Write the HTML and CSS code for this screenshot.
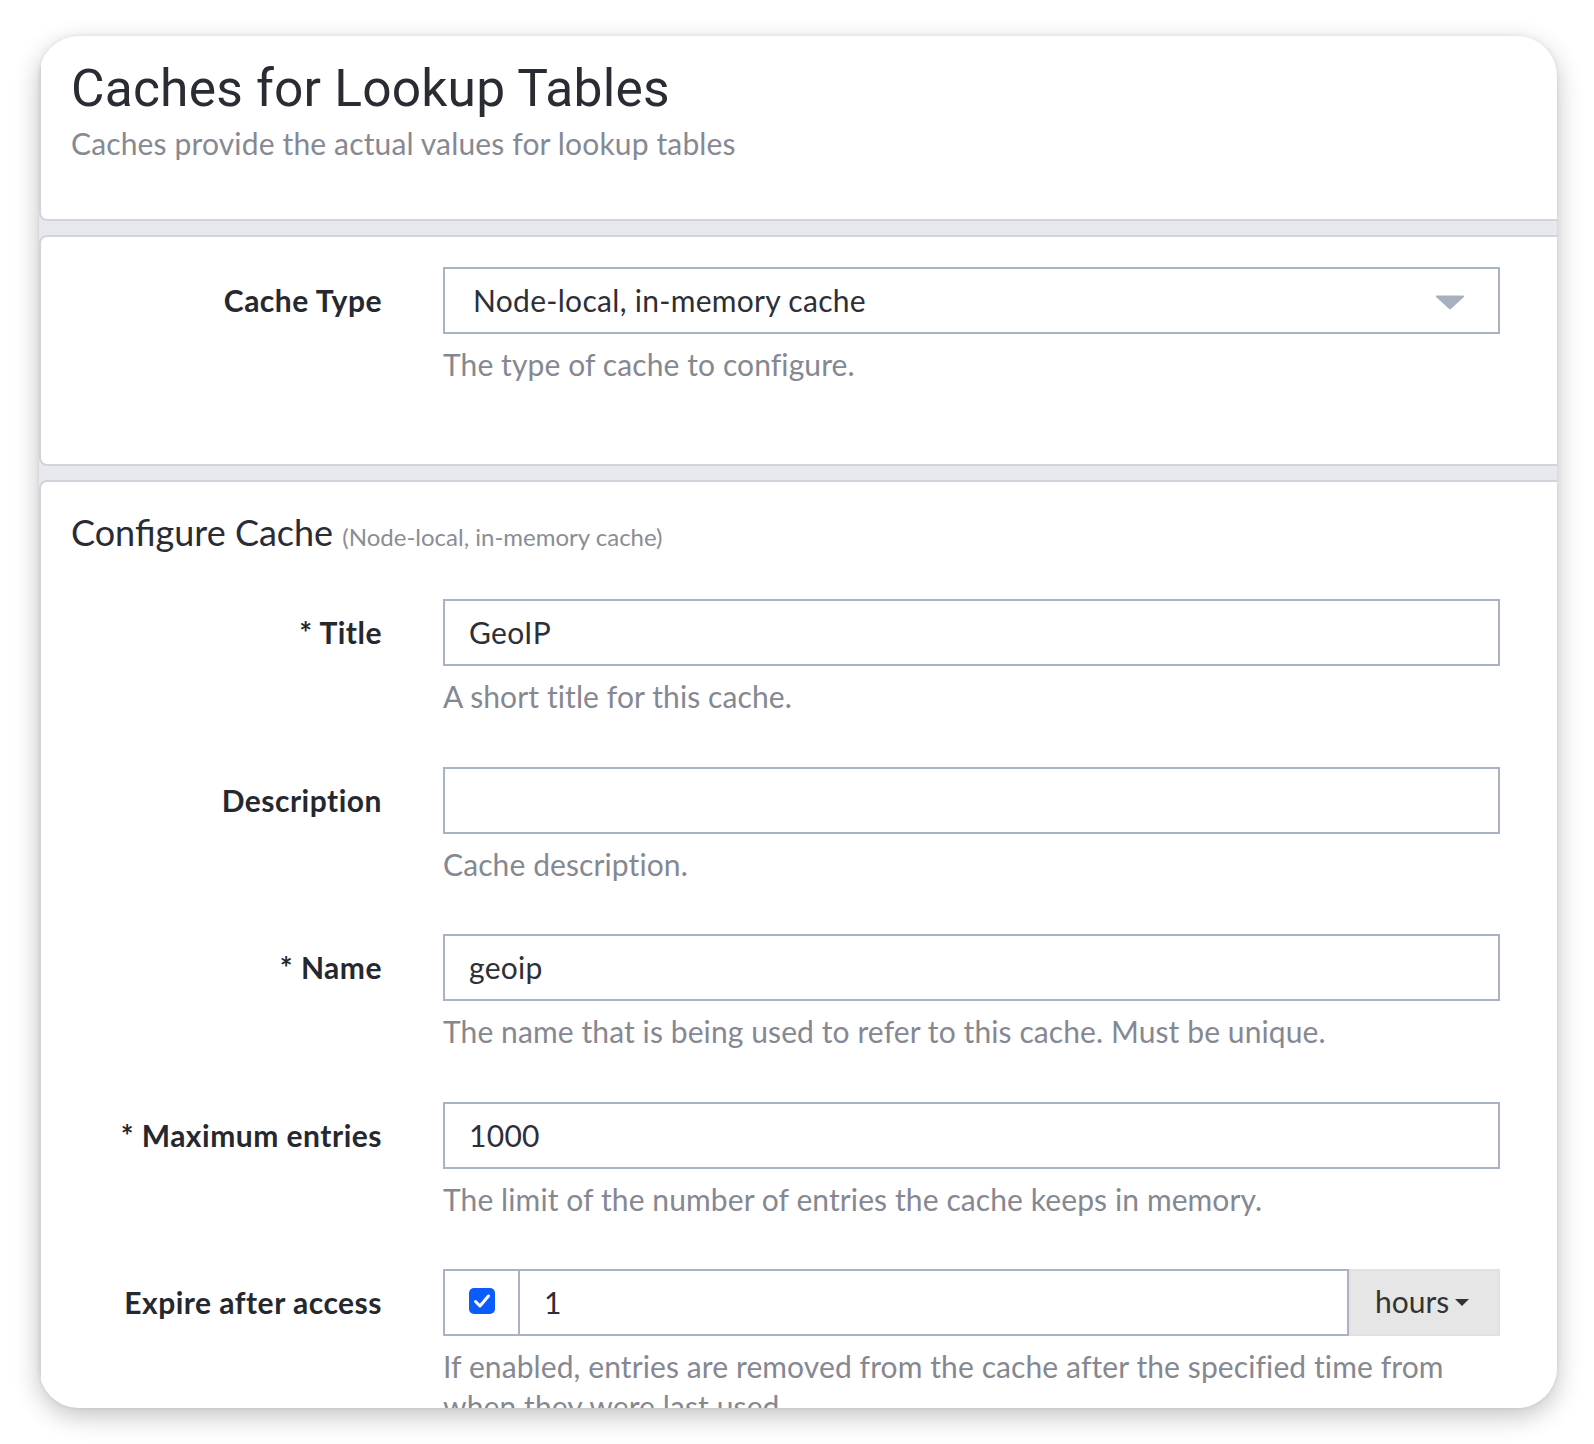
FILE: index.html
```html
<!DOCTYPE html>
<html lang="en">
<head>
<meta charset="utf-8">
<title>Caches for Lookup Tables</title>
<link rel="stylesheet" href="styles.css">
</head>
<body>
<div class="window">
  <section class="panel panel-header">
    <h1 class="page-title">Caches for Lookup Tables</h1>
    <p class="page-sub">Caches provide the actual values for lookup tables</p>
  </section>

  <section class="panel panel-type">
    <div class="form-row">
      <label class="label">Cache Type</label>
      <div class="field">
        <div class="select">
          <span class="select-value">Node-local, in-memory cache</span>
          <svg class="select-caret" width="32" height="16" viewBox="0 0 32 16"><path d="M3 1.5 H29 Q31 1.5 29.6 3.2 L17.4 14.6 Q16 15.8 14.6 14.6 L2.4 3.2 Q1 1.5 3 1.5 Z" fill="#a8b0bf"/></svg>
        </div>
        <p class="help">The type of cache to configure.</p>
      </div>
    </div>
  </section>

  <section class="panel panel-config">
    <h2 class="config-title">Configure Cache <small class="config-sub">(Node-local, in-memory cache)</small></h2>

    <div class="form-row">
      <label class="label">* Title</label>
      <div class="field">
        <div class="input">GeoIP</div>
        <p class="help">A short title for this cache.</p>
      </div>
    </div>

    <div class="form-row">
      <label class="label">Description</label>
      <div class="field">
        <div class="input"></div>
        <p class="help">Cache description.</p>
      </div>
    </div>

    <div class="form-row">
      <label class="label">* Name</label>
      <div class="field">
        <div class="input">geoip</div>
        <p class="help">The name that is being used to refer to this cache. Must be unique.</p>
      </div>
    </div>

    <div class="form-row">
      <label class="label">* Maximum entries</label>
      <div class="field">
        <div class="input">1000</div>
        <p class="help">The limit of the number of entries the cache keeps in memory.</p>
      </div>
    </div>

    <div class="form-row">
      <label class="label">Expire after access</label>
      <div class="field">
        <div class="input-group">
          <div class="addon">
            <span class="checkbox">
              <svg width="18" height="16" viewBox="0 0 18 16"><path d="M2.5 8.5 L7 13 L15.5 3" fill="none" stroke="#fff" stroke-width="3" stroke-linecap="round" stroke-linejoin="round"/></svg>
            </span>
          </div>
          <div class="input group-input">1</div>
          <div class="unit-btn">hours<span class="unit-caret"></span></div>
        </div>
        <p class="help">If enabled, entries are removed from the cache after the specified time from when they were last used.</p>
      </div>
    </div>
  </section>
</div>
</body>
</html>
```
FILE: styles.css
```css
html, body {
  margin: 0;
  padding: 0;
  background: #ffffff;
}

body {
  font-family: "Lato", "Liberation Sans", sans-serif;
  width: 1594px;
  height: 1444px;
  overflow: hidden;
}

.window {
  margin: 36px 0 0 39px;
  width: 1518px;
  height: 1372px;
  border-radius: 40px;
  overflow: hidden;
  background: #e8e9ee;
  box-shadow: 0 8px 26px rgba(0, 0, 0, 0.24), 0 0 4px rgba(0, 0, 0, 0.08);
  display: flex;
  flex-direction: column;
  gap: 14px;
}

.panel {
  width: 1540px;
  box-sizing: border-box;
  background: #ffffff;
  border: 2px solid #cfd4dd;
  border-radius: 8px;
  flex-shrink: 0;
}

.panel-header {
  margin-top: -10px;
  height: 195px;
  padding: 31px 0 0 30px;
}

.page-title {
  margin: 0;
  font-family: "Roboto", "Inter", sans-serif;
  font-weight: 400;
  font-size: 51.5px;
  line-height: 60px;
  color: #2a2c34;
  letter-spacing: 0.2px;
}

.page-sub {
  margin: 4px 0 0;
  font-size: 30px;
  letter-spacing: 0.15px;
  line-height: 40px;
  color: #868993;
}

.panel-type {
  height: 231px;
  padding-top: 30px;
}

.panel-config {
  padding-top: 30px;
  flex-grow: 1;
  border-bottom: none;
  border-radius: 8px 8px 0 0;
}

.config-title {
  margin: 0 0 42px 30px;
  font-weight: 400;
  font-size: 36px;
  line-height: 40px;
  color: #2a2c34;
}

.config-sub {
  font-size: 24px;
  color: #8a8d96;
}

.form-row {
  display: grid;
  grid-template-columns: 341px 1057px;
  column-gap: 61px;
  margin-bottom: 30px;
}

.label {
  text-align: right;
  font-weight: 700;
  font-size: 30px;
  letter-spacing: 0.5px;
  line-height: 40px;
  padding-top: 13px;
  color: #262830;
}

.field {
  min-width: 0;
}

.select,
.input {
  box-sizing: border-box;
  height: 67px;
  border: 2px solid #a9b3c3;
  background: #fff;
  font-size: 30px;
  letter-spacing: 0.3px;
  line-height: 63px;
  color: #2c2f37;
}

.select {
  display: flex;
  align-items: center;
  justify-content: space-between;
  padding: 0 32px 0 28px;
}

.select-caret {
  display: block;
  margin-top: 2px;
}

.input {
  padding: 0 24px;
}

.help {
  margin: 10px 0 20.5px;
  font-size: 30px;
  letter-spacing: 0.1px;
  line-height: 40px;
  color: #858892;
}

.input-group {
  display: flex;
  height: 67px;
}

.addon {
  box-sizing: border-box;
  width: 77px;
  height: 67px;
  border: 2px solid #a9b3c3;
  display: flex;
  justify-content: center;
  align-items: center;
  padding-bottom: 4px;
}

.checkbox {
  width: 26px;
  height: 26px;
  border-radius: 5px;
  background: #0b5cff;
  display: flex;
  align-items: center;
  justify-content: center;
}

.checkbox svg {
  display: block;
}

.group-input {
  flex: 1;
  border-left: none;
  padding-left: 24px;
}

.unit-btn {
  box-sizing: border-box;
  width: 151px;
  height: 67px;
  background: #e6e6e6;
  border: 2px solid #e1e1e1;
  color: #333333;
  font-size: 30px;
  line-height: 60px;
  display: flex;
  align-items: center;
  padding-left: 24px;
  padding-bottom: 4px;
}

.unit-caret {
  display: inline-block;
  margin-left: 6px;
  margin-top: 4px;
  width: 0;
  height: 0;
  border-left: 7px solid transparent;
  border-right: 7px solid transparent;
  border-top: 7px solid #333333;
}
```
